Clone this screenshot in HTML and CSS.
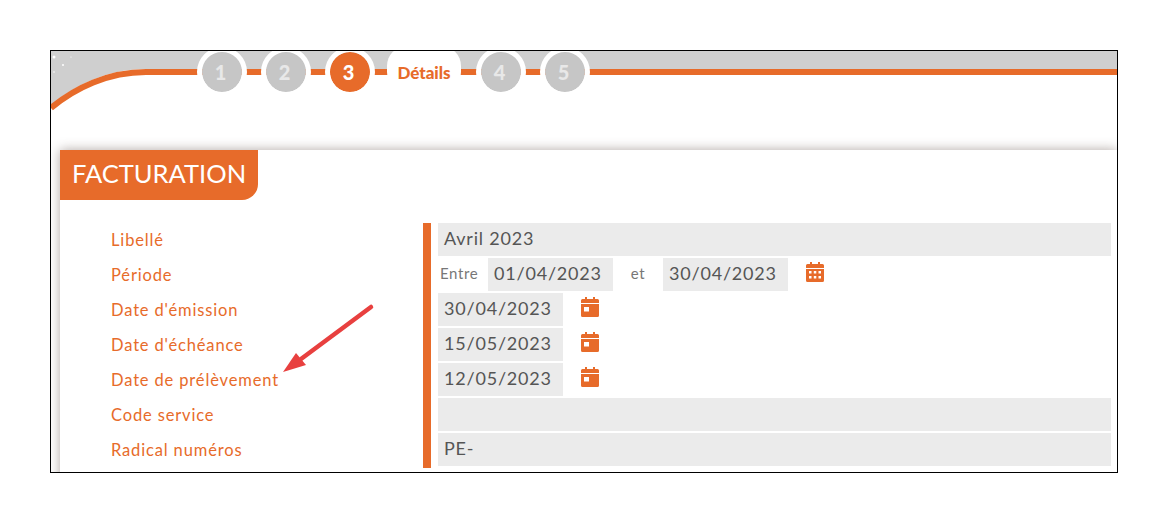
FILE: index.html
```html
<!DOCTYPE html>
<html lang="fr">
<head>
    <meta charset="UTF-8">
    <title>Facturation</title>
    <link rel="stylesheet" href="styles.css">
</head>
<body>
    <div class="frame">
        <div class="header">
            <svg class="header-bg" width="1066" height="99" viewBox="0 0 1066 99">
                <path fill="#cfcfcf" d="M0 0H1066V18H95C57 18 24 34 0 54Z"/>
                <path fill="none" stroke="#e76b2a" stroke-width="6" d="M1066 21H95C57 21 24 37 0 57"/>
                <g fill="#fff">
                    <circle cx="3" cy="6" r="1.5"/>
                    <circle cx="20" cy="6" r="0.6"/>
                    <circle cx="12" cy="14" r="1"/>
                    <circle cx="3" cy="21" r="0.8"/>
                </g>
            </svg>
            <div class="steps">
                <div class="step">1</div>
                <div class="step">2</div>
                <div class="step active">3</div>
                <div class="step-label">Détails</div>
                <div class="step">4</div>
                <div class="step">5</div>
            </div>
        </div>

        <div class="panel">
            <div class="panel-title">FACTURATION</div>
            <div class="form">
                <div class="labels">
                    <div class="label">Libellé</div>
                    <div class="label">Période</div>
                    <div class="label">Date d'émission</div>
                    <div class="label">Date d'échéance</div>
                    <div class="label">Date de prélèvement</div>
                    <div class="label">Code service</div>
                    <div class="label">Radical numéros</div>
                </div>
                <div class="values">
                    <div class="row"><div class="field wide">Avril 2023</div></div>
                    <div class="row">
                        <span class="word first">Entre</span>
                        <div class="field date">01/04/2023</div>
                        <span class="word between">et</span>
                        <div class="field date">30/04/2023</div>
                        <svg class="cal" width="18" height="20" viewBox="0 0 18 20">
                            <path fill="#e76b2a" d="M4 0h2v2h6V0h2v2h2.500A1.500 1.500 0 0 1 18 3.500V6H0V3.500A1.500 1.500 0 0 1 1.500 2H4ZM0 7h18v11.500a1.500 1.500 0 0 1-1.500 1.500h-15A1.500 1.500 0 0 1 0 18.500Z"/>
                            <path fill="#fff" d="M3 9h2.500v2.500H3ZM7.800 9h2.500v2.500H7.800ZM12.500 9H15v2.500h-2.500ZM3 14h2.500v2.500H3ZM7.800 14h2.500v2.500H7.800ZM12.500 14H15v2.500h-2.500Z"/>
                        </svg>
                    </div>
                    <div class="row">
                        <div class="field date">30/04/2023</div>
                        <svg class="cal" width="18" height="20" viewBox="0 0 18 20">
                            <path fill="#e76b2a" d="M4 0h2v2h6V0h2v2h2.500A1.500 1.500 0 0 1 18 3.500V6H0V3.500A1.500 1.500 0 0 1 1.500 2H4ZM0 7h18v11.500a1.500 1.500 0 0 1-1.500 1.500h-15A1.500 1.500 0 0 1 0 18.500Z"/>
                            <path fill="#fff" d="M3 10h5v4.500H3Z"/>
                        </svg>
                    </div>
                    <div class="row">
                        <div class="field date">15/05/2023</div>
                        <svg class="cal" width="18" height="20" viewBox="0 0 18 20">
                            <path fill="#e76b2a" d="M4 0h2v2h6V0h2v2h2.500A1.500 1.500 0 0 1 18 3.500V6H0V3.500A1.500 1.500 0 0 1 1.500 2H4ZM0 7h18v11.500a1.500 1.500 0 0 1-1.500 1.500h-15A1.500 1.500 0 0 1 0 18.500Z"/>
                            <path fill="#fff" d="M3 10h5v4.500H3Z"/>
                        </svg>
                    </div>
                    <div class="row">
                        <div class="field date">12/05/2023</div>
                        <svg class="cal" width="18" height="20" viewBox="0 0 18 20">
                            <path fill="#e76b2a" d="M4 0h2v2h6V0h2v2h2.500A1.500 1.500 0 0 1 18 3.500V6H0V3.500A1.500 1.500 0 0 1 1.500 2H4ZM0 7h18v11.500a1.500 1.500 0 0 1-1.500 1.500h-15A1.500 1.500 0 0 1 0 18.500Z"/>
                            <path fill="#fff" d="M3 10h5v4.500H3Z"/>
                        </svg>
                    </div>
                    <div class="row"><div class="field wide"></div></div>
                    <div class="row"><div class="field wide">PE-</div></div>
                </div>
            </div>
        </div>

        <!-- fleche d'annotation par dessus le formulaire -->
        <svg class="arrow" width="100" height="80" viewBox="0 0 100 80">
            <path fill="none" stroke="#e8403f" stroke-width="4.5" stroke-linecap="round" d="M90 4L20 56"/>
            <path fill="#e8403f" d="M2 69L15 50L25 62Z"/>
        </svg>
    </div>
</body>
</html>
```

FILE: styles.css
```css
* {
    margin: 0;
    padding: 0;
    box-sizing: border-box;
}

body {
    background: #fff;
    font-family: 'Lato', sans-serif;
}

.frame {
    position: relative;
    width: 1068px;
    height: 423px;
    margin: 50px 0 0 50px;
    border: 1px solid #000;
    overflow: hidden;
    background: #fff;
}

.header {
    position: relative;
    height: 99px;
}

.header-bg {
    position: absolute;
    top: 0;
    left: 0;
}

.steps {
    position: relative;
    display: flex;
    align-items: flex-start;
    padding: 1px 0 0 151px;
}

.step {
    width: 40px;
    height: 40px;
    margin-right: 24px;
    padding-right: 3px;
    border-radius: 50%;
    background: #c6c6c6;
    outline: 5px solid #fff;
    color: #e8e8e8;
    font-size: 20px;
    font-weight: 900;
    line-height: 40px;
    text-align: center;
}

.step.active {
    margin-right: 17px;
    background: #e76b2a;
    color: #fff;
}

.step-label {
    width: 74px;
    height: 46px;
    margin: -6px 20px 0 0;
    padding-top: 17px;
    border-radius: 20px;
    background: #fff;
    color: #e76b2a;
    font-size: 17px;
    font-weight: 900;
    line-height: 20px;
    text-align: center;
}

.panel {
    height: 340px;
    margin-left: 9px;
    background: #fff;
    box-shadow: 0 0 11px rgba(80, 60, 50, 0.45);
}

.panel-title {
    width: 198px;
    height: 50px;
    padding-left: 12px;
    border-radius: 0 0 16px 0;
    background: #e76b2a;
    color: #fff;
    font-size: 25.5px;
    line-height: 47px;
}

.form {
    display: flex;
    margin-top: 23px;
}

.labels {
    width: 363px;
    padding-left: 51px;
}

.label {
    height: 35px;
    color: #e76b2a;
    font-size: 16.5px;
    letter-spacing: 0.85px;
    line-height: 34px;
}

.values {
    flex: 1;
    display: flex;
    flex-direction: column;
    gap: 2px;
    padding: 0 6px 2px 7px;
    border-left: 8px solid #e76b2a;
}

.row {
    display: flex;
    align-items: center;
    height: 33px;
}

.field {
    height: 33px;
    padding-left: 6px;
    background: #ebebeb;
    color: #555;
    font-size: 18px;
    letter-spacing: 0.8px;
    line-height: 31px;
}

.wide {
    width: 100%;
}

.date {
    width: 125px;
}

.word {
    margin-bottom: 3px;
    color: #777;
    font-size: 15px;
    letter-spacing: 0.6px;
}

.first {
    width: 50px;
    padding-left: 2px;
}

.between {
    width: 50px;
    text-align: center;
}

.cal {
    margin-left: 18px;
    margin-top: -6px;
}

.arrow {
    position: absolute;
    top: 252px;
    left: 230px;
}
```
